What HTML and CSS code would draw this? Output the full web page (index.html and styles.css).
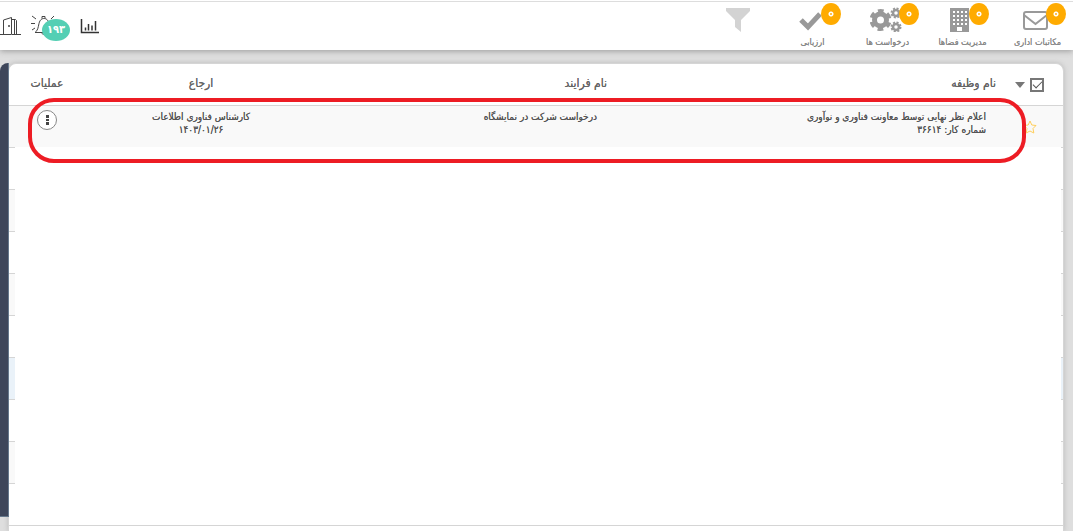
FILE: index.html
```html
<!DOCTYPE html>
<html lang="fa" dir="rtl">
<head>
<meta charset="utf-8">
<title>کارتابل</title>
<link rel="stylesheet" href="styles.css">
</head>
<body>
<header class="topbar">
  <nav class="menu">
    <a class="item" href="#">
      <svg class="icon" viewBox="0 0 36 28"><g fill="none" stroke="#999" stroke-width="2"><rect x="4" y="8" width="23" height="17" rx="2"/><path d="M4 11l11.500 9L27 11"/></g></svg>
      <span class="dot"></span><span class="label">مکاتبات اداری</span>
    </a>
    <a class="item" href="#">
      <svg class="icon" viewBox="0 0 36 28"><path fill="#999" d="M5 4h19v24H5z"/><g fill="none" stroke="#fff" stroke-width="2" stroke-dasharray="2 2"><path d="M8 8h14M8 12h14M8 16h14M8 20h14"/></g><path fill="#fff" d="M12 23h5v4h-5z"/></svg>
      <span class="dot near"></span><span class="label">مدیریت فضاها</span>
    </a>
    <a class="item" href="#">
      <svg class="icon" viewBox="0 0 36 28"><g fill="none" stroke="#999"><circle cx="10.500" cy="16" r="6" stroke-width="5"/><circle cx="10.500" cy="16" r="9" stroke-width="4" stroke-dasharray="5.400 4.025" stroke-dashoffset="2.700" transform="rotate(30 10.500 16)"/><circle cx="26" cy="9" r="3" stroke-width="2.500"/><circle cx="26" cy="9" r="4.500" stroke-width="2" stroke-dasharray="2 1.534"/><circle cx="26" cy="23" r="3" stroke-width="2.500"/><circle cx="26" cy="23" r="4.500" stroke-width="2" stroke-dasharray="2 1.534"/></g></svg>
      <span class="dot far"></span><span class="label">درخواست ها</span>
    </a>
    <a class="item" href="#">
      <svg class="icon" viewBox="0 0 36 28"><path fill="none" stroke="#999" stroke-width="5" d="M6 16l7 7L25 10"/></svg>
      <span class="dot"></span><span class="label">ارزیابی</span>
    </a>
    <a class="item" href="#" aria-label="فیلتر">
      <svg class="icon" viewBox="0 0 36 28"><path fill="#d3d3d3" d="M6 4h24v3l-9 9v12l-6-5v-7L6 7z"/></svg>
    </a>
  </nav>
  <div class="tools">
    <button class="tool chart" aria-label="گزارش"><svg viewBox="0 0 22 20"><path fill="none" stroke="#333" stroke-width="1.500" d="M2.500 4v13.500H20"/><path fill="none" stroke="#333" stroke-width="1.500" d="M6.500 15.500v-3M9.500 15.500V9M13 15.500v-5M16.500 15.500V6"/></svg></button>
    <button class="tool bell" aria-label="اعلان‌ها"><svg viewBox="0 0 24 20"><g fill="none" stroke="#444"><path d="M4 17.500c3-2 3-5 4-9s3-5 5-5 4 1 5 5 1 7 4 9zM11 3.500v-2h3v2M11 17.500c0 3 4 3 4 0M5 4L1 1M4 8.500H0M4 13l-3 2M20 4l3-3"/></g></svg><span class="count">۱۹۳</span></button>
    <button class="tool" aria-label="خروج"><svg viewBox="0 0 22 20"><g fill="none" stroke="#444"><path d="M0 19.500h4M12 19.500h9M3.500 19.500V5l8-2.500v17zM11.500 4.500h4l1 1v14M14.500 5v14"/></g><circle cx="9" cy="11" r="1" fill="#444"/></svg></button>
  </div>
</header>
<main class="page">
  <section class="panel">
    <table class="tasks">
      <colgroup><col class="c-check"><col><col class="c-process"><col class="c-ref"><col class="c-ops"></colgroup>
      <thead>
        <tr>
          <th><div class="select"><label class="pick"><input type="checkbox" checked aria-label="انتخاب همه"></label><span class="caret"></span></div></th>
          <th>نام وظیفه</th><th>نام فرایند</th><th class="mid">ارجاع</th><th class="mid">عملیات</th>
        </tr>
      </thead>
      <tbody>
        <tr>
          <td class="fav"><svg class="star" viewBox="0 0 14 14"><path fill="none" stroke="#ffcf5c" d="M7 1l1.800 4 4.200.5-3 3 .8 4.500L7 11l-3.800 2L4 8.500l-3-3L5.200 5z"/></svg></td>
          <td class="text">اعلام نظر نهایی توسط معاونت فناوری و نوآوری<br>شماره کار: ۳۶۶۱۴</td>
          <td class="text">درخواست شرکت در نمایشگاه</td>
          <td class="mid">کارشناس فناوری اطلاعات<br>۱۴۰۳/۰۱/۲۶</td>
          <td class="mid"><button class="more" aria-label="عملیات"><svg viewBox="0 0 18 18"><path fill="#444" d="M8 4h3v3H8zM8 8h3v2H8zM8 11h3v3H8z"/></svg></button></td>
        </tr>
      </tbody>
    </table>
    <div class="rows">
      <div class="row edge"></div><div class="row"></div><div class="row alt"></div><div class="row"></div><div class="row alt"></div><div class="row"></div><div class="row hot"></div><div class="row"></div><div class="row alt"></div><div class="row"></div>
    </div>
    <div class="highlight"></div>
  </section>
  <aside class="rail"></aside>
</main>
</body>
</html>
```
FILE: styles.css
```css
* { box-sizing: border-box; }
body {
  margin: 0;
  min-height: 100vh;
  display: flex;
  flex-direction: column;
  background: #dedede;
  color: #555;
  font: 10px/13px "DejaVu Sans Condensed", "DejaVu Sans", sans-serif;
  text-shadow: 0 0 0 currentColor;
  overflow: hidden;
}
button { padding: 0; border: 0; background: none; }
.topbar {
  position: relative;
  display: flex;
  justify-content: space-between;
  height: 50px;
  border-top: 1px solid #fff;
  background: #fff;
  box-shadow: 0 1px 6px #999, inset 0 1px #ddd;
}
.menu { display: flex; margin-right: -2px; }
.item {
  position: relative;
  width: 75px;
  padding-top: 3px;
  text-align: center;
  text-decoration: none;
  color: #888;
  font-size: 9px;
}
.icon { display: block; width: 36px; height: 28px; margin: 0 auto 4px; }
.label { display: block; white-space: nowrap; }
.dot {
  position: absolute;
  top: 2px;
  right: 9px;
  width: 20px;
  height: 22px;
  border-radius: 50%;
  background: radial-gradient(circle, #ffc34d 1px, #fff 1px, #fff 2px, #ffab00 3px);
}
.near { right: 11px; }
.far { right: 6px; }
.tools { display: flex; padding-top: 14px; }
.tool { position: relative; width: 22px; height: 20px; }
.tool svg { display: block; width: 100%; height: 20px; }
.bell { width: 24px; margin: 0 24px 0 9px; }
.count {
  position: absolute;
  top: 4px;
  left: 11px;
  width: 28px;
  border-radius: 50%;
  background: #54cfb4;
  color: #fff;
  font: bold 11px/22px "DejaVu Sans Condensed", "DejaVu Sans", sans-serif;
}
.page { position: relative; flex: 1; display: flex; padding: 13px 9px 0 8px; }
.panel {
  position: relative;
  flex: 1;
  border: 1px solid #d5d5d5;
  border-bottom: 0;
  border-radius: 8px 8px 0 0;
  background: #fff;
  box-shadow: 0 0 5px #bbb;
}
.rail {
  position: absolute;
  top: 13px;
  left: 0;
  bottom: 14px;
  width: 9px;
  border: solid #66788c;
  border-width: 0 1px 1px 0;
  border-radius: 8px 0 0 0;
  background: #3e465a;
}
.tasks { width: 100%; table-layout: fixed; border-collapse: separate; border-spacing: 0; }
.c-check { width: 67px; }
.c-process { width: 290px; }
.c-ref { width: 232px; }
.c-ops { width: 76px; }
th { height: 42px; padding: 0 0 2px; border-bottom: 1px solid #d5d5d5; text-align: right; font-size: 12px; font-weight: normal; color: #666; }
td { height: 41px; padding: 4px 0 0; vertical-align: top; background: #f9f9f9; }
.text { padding-right: 10px; }
.mid { text-align: center; }
.select { display: flex; align-items: center; gap: 5px; padding: 3px 19px 0 0; }
.pick { display: flex; }
.pick input {
  appearance: none;
  width: 14px;
  height: 14px;
  margin: 0;
  border: 2px solid #777;
  background: #fff;
  display: flex;
  align-items: center;
  justify-content: center;
}
.pick input:checked::before {
  content: "";
  flex: none;
  width: 8px;
  height: 4px;
  margin-bottom: 3px;
  border: solid #555;
  border-width: 0 0 1px 1px;
  transform: rotate(-45deg);
}
.caret { border: 5px solid transparent; border-top: 6px solid #777; border-bottom: 0; }
.fav { padding: 14px 26px 0 0; }
.star { display: block; width: 14px; height: 14px; }
.more { width: 20px; height: 20px; border: 1px solid #888; border-radius: 50%; background: #fff; }
.more svg { display: block; width: 18px; height: 18px; }
.row { height: 42px; padding: 0 2px 0 6px; border-bottom: 1px solid #d5d5d5; }
.row::before { content: ""; display: block; height: 42px; background: #fff; }
.row:last-child::before { height: 41px; }
.edge, .edge::before { height: 1px; }
.alt { background: #f9f9f9; }
.hot { background: #eaf2f9; }
.highlight {
  position: absolute;
  top: 34px;
  right: 37px;
  left: 19px;
  height: 65px;
  border: 4px solid #ed1c24;
  border-radius: 26px;
  pointer-events: none;
}
```
